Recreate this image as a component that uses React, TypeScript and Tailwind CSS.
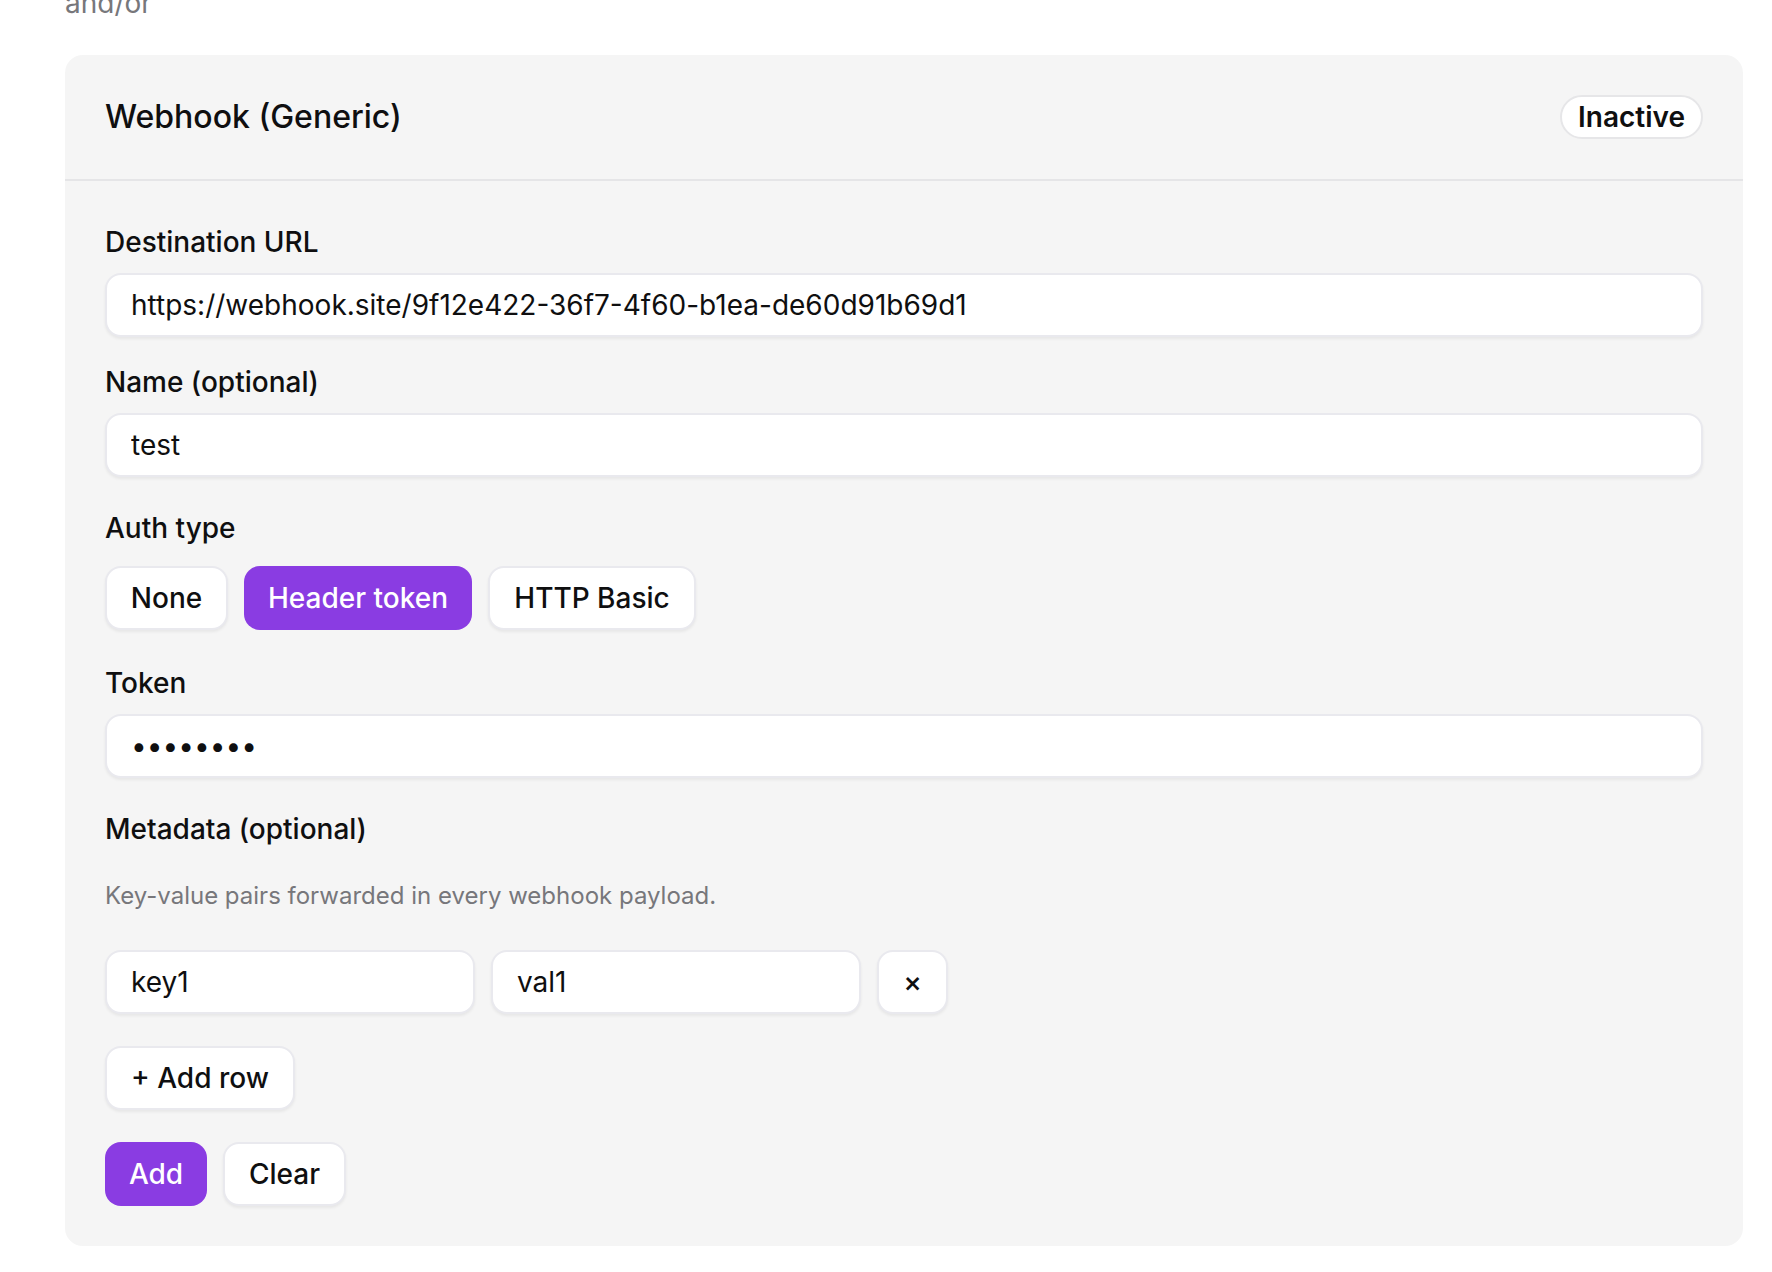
const fieldClass =
  "block h-[64px] w-full rounded-[16px] border-2 border-[#e9e9ee] bg-white px-[24px] text-[28px] text-[#0f0f10] shadow-[0_2px_3px_rgba(0,0,0,0.06)] outline-none"

const buttonClass =
  "h-[64px] rounded-[16px] border-2 border-[#e9e9ee] bg-white text-[28px] font-medium text-[#0f0f10] shadow-[0_2px_3px_rgba(0,0,0,0.06)]"

const primaryClass = "h-[64px] rounded-[16px] bg-[#8a3ce2] text-[28px] font-medium text-white"

function Label({ children }: { children: string }) {
  return <div className="text-[28px] leading-[34px] font-medium text-[#0f0f10]">{children}</div>
}

export default function App() {
  return (
    <div className="h-[1272px] overflow-hidden bg-white font-['Inter',sans-serif]">
      <div className="pl-[65px] pr-[29px]">
        <p className="-mt-[14px] h-[69px] text-[28px] leading-[34px] text-[#77777b]">and/or</p>

        <section className="rounded-[18px] bg-[#f5f5f5]">
          <header className="flex h-[126px] items-center justify-between border-b-2 border-[#e5e5e7] px-[40px]">
            <h2 className="text-[32px] font-medium text-[#0f0f10]">Webhook (Generic)</h2>
            <span className="flex h-[44px] w-[143px] items-center justify-center rounded-full border-2 border-[#e6e6e8] bg-white text-[28px] font-semibold text-[#0f0f10]">
              Inactive
            </span>
          </header>

          <div className="px-[40px] pt-[44px] pb-[40px]">
            <Label>Destination URL</Label>
            <input className={`${fieldClass} mt-[14px]`} readOnly value="https://webhook.site/9f12e422-36f7-4f60-b1ea-de60d91b69d1" />

            <div className="mt-[28px]">
              <Label>Name (optional)</Label>
            </div>
            <input className={`${fieldClass} mt-[14px]`} readOnly value="test" />

            <div className="mt-[34px]">
              <Label>Auth type</Label>
            </div>
            <div className="mt-[21px] flex items-center gap-[16px]">
              <button className={`${buttonClass} w-[123px]`}>None</button>
              <button className={`${primaryClass} w-[228px]`}>Header token</button>
              <button className={`${buttonClass} w-[208px]`}>HTTP Basic</button>
            </div>

            <div className="mt-[36px]">
              <Label>Token</Label>
            </div>
            <input className={`${fieldClass} mt-[14px]`} readOnly type="password" value="abcdefgh" />

            <div className="mt-[34px]">
              <Label>Metadata (optional)</Label>
            </div>
            <p className="mt-[33px] text-[24px] leading-[34px] text-[#77777b]">Key-value pairs forwarded in every webhook payload.</p>

            <div className="mt-[37px] flex gap-[16px]">
              <input className={`${fieldClass} !w-[370px]`} readOnly value="key1" />
              <input className={`${fieldClass} !w-[370px]`} readOnly value="val1" />
              <button className={`${buttonClass} w-[71px]`}>×</button>
            </div>

            <button className={`${buttonClass} mt-[32px] block w-[190px]`}>+ Add row</button>

            <div className="mt-[32px] flex items-center gap-[16px]">
              <button className={`${primaryClass} w-[102px]`}>Add</button>
              <button className={`${buttonClass} w-[123px]`}>Clear</button>
            </div>
          </div>
        </section>
      </div>
    </div>
  )
}
